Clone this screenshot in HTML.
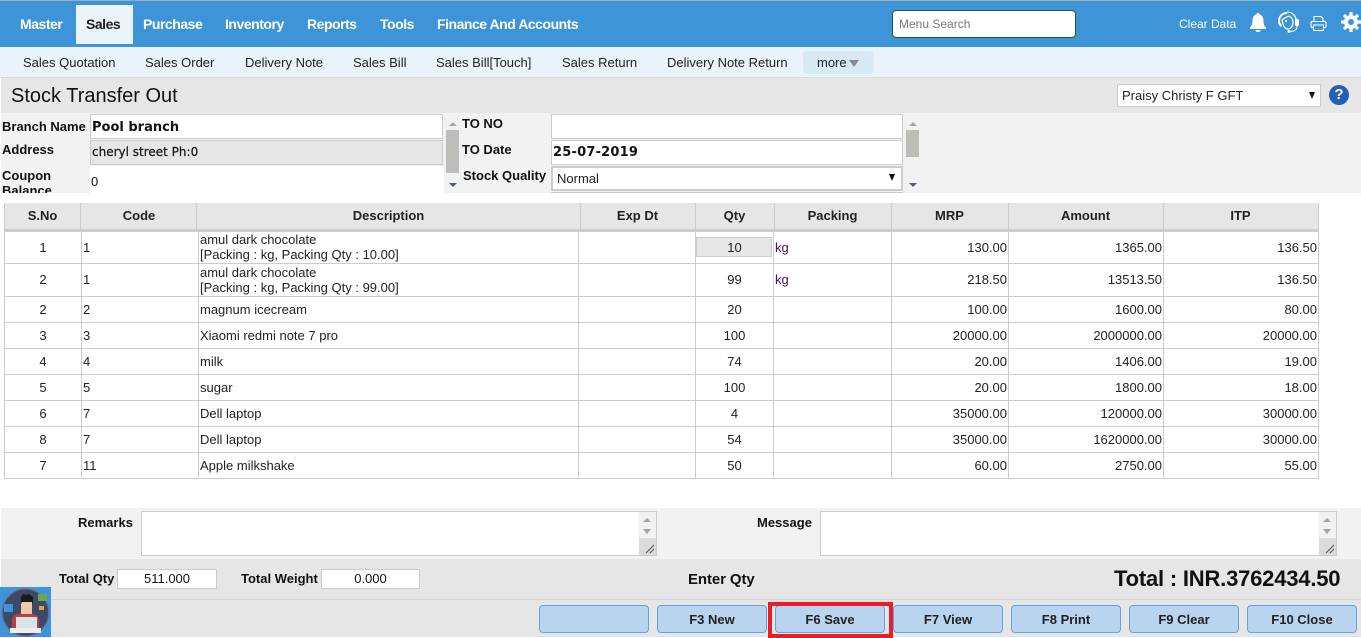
<!DOCTYPE html>
<html><head><meta charset="utf-8"><style>
html,body{margin:0;padding:0;background:#fff}
body{width:1361px;height:638px;position:relative;overflow:hidden;font-family:"Liberation Sans",Arial,sans-serif;color:#111;font-size:12px}
.a{position:absolute;white-space:nowrap}
.m{top:16px;font-size:14px;font-weight:bold;color:#fff;line-height:17px;letter-spacing:-.47px}
.s{top:55px;font-size:13px;color:#222;line-height:16px}
.l{font-size:13px;font-weight:bold;line-height:15px;color:#111}
.i{box-sizing:border-box;border:1px solid #ccc;background:#fff}
.v{position:absolute;width:1px;background:#ccc}
.h{position:absolute;height:1px;background:#ccc;left:4px;width:1315px}
.th{position:absolute;top:208px;font-size:13px;font-weight:bold;line-height:15px;text-align:center;color:#222}
.c{position:absolute;font-size:13px;line-height:15px;color:#222;white-space:nowrap}
.r{text-align:right}.t{text-align:center}
.b{position:absolute;top:605px;width:110px;height:28px;box-sizing:border-box;border:1px solid #5aa5e3;border-radius:4px;background:#b8d4ee;font-size:13px;font-weight:bold;text-align:center;line-height:27px;color:#222}
</style></head><body>
<div class="a" style="left:0;top:0;width:1361px;height:47px;background:#3d94d6;border-top:1px solid #aaa;box-sizing:border-box"></div>
<div class="a" style="left:76px;top:5px;width:57px;height:39px;background:#ebf3fb"></div>
<div class="a m" style="left:20px">Master</div>
<div class="a m" style="left:86px;color:#222">Sales</div>
<div class="a m" style="left:143px">Purchase</div>
<div class="a m" style="left:225px">Inventory</div>
<div class="a m" style="left:307px">Reports</div>
<div class="a m" style="left:380px">Tools</div>
<div class="a m" style="left:437px">Finance And Accounts</div>
<div class="a" style="left:892px;top:10px;width:184px;height:28px;box-sizing:border-box;background:#fff;border:1px solid #1d5e3c;border-radius:4px;padding-left:6px;font-size:12px;line-height:26px;color:#777">Menu Search</div>
<div class="a" style="left:1179px;top:17px;font-size:12px;line-height:15px;color:#fff">Clear Data</div>
<svg class="a" style="left:1249px;top:13px" width="18" height="19" viewBox="0 0 18 19"><path d="M9 0c1 0 1.500.6 1.500 1.300C13.500 2.200 14.500 5 14.500 8c0 3.500 1 5 2.500 6.500V16H1v-1.500C2.500 13 3.500 11.500 3.500 8c0-3 1-5.800 4-6.700C7.500.6 8 0 9 0z" fill="#fff"/><path d="M6.500 17h5c0 1.300-1 2-2.500 2s-2.500-.7-2.500-2z" fill="#fff"/></svg>
<svg class="a" style="left:1277px;top:11px" width="23" height="23" viewBox="0 0 23 23"><path d="M10 1C5 1 1 5 1 10c0 3 1.500 5 3 6l1-2c-1-1-2-2-2-4 0-4 3-7 7-7" fill="#fff"/><path d="M10 1c5 0 9 3.500 9 8" fill="none" stroke="#fff" stroke-width="1.300"/><path d="M5 9c2-2 5-3 7-4 2 1 4 3 4 6 0 4-2 7-5 7-3 0-5-3-6-9z" fill="none" stroke="#fff" stroke-width="1.200"/><circle cx="9" cy="10" r="1" fill="#fff"/><rect x="18" y="8" width="4" height="7" rx="1.500" fill="#fff"/><path d="M20 15c0 4-3 5.500-7 5.500" fill="none" stroke="#fff"/><circle cx="12" cy="20.500" r="1.500" fill="#fff"/></svg>
<svg class="a" style="left:1310px;top:15px" width="17" height="17" viewBox="0 0 17 17" fill="none" stroke="#fff" stroke-width="1.100"><path d="M4 6.500V1.500h7l2 2v3"/><rect x="1" y="6.500" width="15" height="6" rx="1.500"/><rect x="3.500" y="10" width="10" height="5.500" fill="#3d94d6"/></svg>
<svg class="a" style="left:1341px;top:12px" width="20" height="20" viewBox="0 0 20 20"><circle cx="10" cy="10" r="5" fill="none" stroke="#fff" stroke-width="4"/><g stroke="#fff" stroke-width="3.200"><path d="M10 0v4M10 16v4M0 10h4M16 10h4M3 3l3 3M14 14l3 3M17 3l-3 3M6 14l-3 3"/></g></svg>

<div class="a" style="left:0;top:47px;width:1361px;height:30px;background:#eaf3fb"></div>
<div class="a" style="left:0;top:77px;width:1361px;height:1px;background:#d5dde4"></div>
<div class="a s" style="left:23px">Sales Quotation</div>
<div class="a s" style="left:145px">Sales Order</div>
<div class="a s" style="left:245px">Delivery Note</div>
<div class="a s" style="left:353px">Sales Bill</div>
<div class="a s" style="left:436px">Sales Bill[Touch]</div>
<div class="a s" style="left:562px">Sales Return</div>
<div class="a s" style="left:667px">Delivery Note Return</div>
<div class="a" style="left:803px;top:51px;width:71px;height:23px;background:#d5eaf5;border-radius:4px"></div>
<div class="a s" style="left:817px">more</div>
<svg class="a" style="left:849px;top:60px" width="10" height="7"><path d="M0 0h10L5 7z" fill="#888"/></svg>

<div class="a" style="left:1px;top:78px;width:1360px;height:35px;background:#e6e6e6"></div>
<div class="a" style="left:11px;top:85px;font-size:20px;line-height:23px;color:#111">Stock Transfer Out</div>
<div class="a i" style="left:1117px;top:84px;width:204px;height:23px;padding-left:4px;font-size:13px;line-height:22px;color:#222">Praisy Christy F GFT</div>
<svg class="a" style="left:1309px;top:92px" width="6" height="7"><path d="M0 0h6L3 7z" fill="#111"/></svg>
<div class="a" style="left:1329px;top:85px;width:20px;height:20px;border-radius:50%;background:#2160b4;color:#fff;font-weight:bold;font-size:15px;line-height:20px;text-align:center">?</div>

<div class="a" style="left:1px;top:113px;width:1360px;height:80px;background:#f2f2f2"></div>
<div class="a l" style="left:2px;top:119px">Branch Name</div>
<div class="a i" style="left:90px;top:114px;width:353px;height:25px;padding-left:1px;font:bold 13px/25px 'DejaVu Sans',sans-serif;color:#111">Pool branch</div>
<div class="a l" style="left:2px;top:142px">Address</div>
<div class="a i" style="left:90px;top:140px;width:353px;height:25px;padding-left:1px;background:#e6e6e6;font:12px/23px 'DejaVu Sans',sans-serif;color:#111;-webkit-text-stroke:.2px #111">cheryl street Ph:0</div>
<div class="a" style="left:90px;top:166px;width:354px;height:27px;background:#fff"></div>
<div class="a" style="left:2px;top:168px;width:80px;height:25px;overflow:hidden;white-space:normal;font-size:13px;font-weight:bold;line-height:15px">Coupon Balance</div>
<div class="a" style="left:91px;top:174px;font-size:13px;line-height:15px">0</div>
<svg class="a" style="left:446px;top:117px" width="14" height="76"><path d="M3 9l4-4 4 4z" fill="#a8a8a8"/><rect x="0" y="13" width="13" height="43" fill="#bdbdb9"/><path d="M3 66h8l-4 4z" fill="#4a5a78"/></svg>
<div class="a l" style="left:462px;top:116px">TO NO</div>
<div class="a i" style="left:551px;top:114px;width:352px;height:25px"></div>
<div class="a l" style="left:462px;top:142px">TO Date</div>
<div class="a i" style="left:551px;top:140px;width:352px;height:25px;padding-left:1px;font:bold 13px/24px 'DejaVu Sans',sans-serif;letter-spacing:.2px;color:#111">25-07-2019</div>
<div class="a l" style="left:463px;top:168px">Stock Quality</div>
<div class="a" style="left:551px;top:166px;width:352px;height:25px;box-sizing:border-box;border:2px solid #ccc;background:#fff;padding-left:4px;font-size:13px;line-height:21px;color:#222">Normal</div>
<div class="a" style="left:551px;top:192px;width:352px;height:1px;background:#ccc"></div>
<svg class="a" style="left:889px;top:174px" width="6" height="7"><path d="M0 0h6L3 7z" fill="#111"/></svg>
<svg class="a" style="left:906px;top:117px" width="14" height="76"><path d="M3 9l4-4 4 4z" fill="#a8a8a8"/><rect x="0" y="13" width="13" height="27" fill="#bdbdb9"/><path d="M3 66h8l-4 4z" fill="#4a5a78"/></svg>

<!-- table -->
<div class="a" style="left:4px;top:203px;width:1315px;height:26px;background:#e6e6e6"></div>
<div class="a" style="left:4px;top:229px;width:1315px;height:3px;background:#ccc"></div>
<div class="v" style="left:4px;top:203px;height:276px"></div><div class="v" style="left:1318px;top:203px;height:276px"></div>
<div class="v" style="left:80px;top:203px;height:26px"></div><div class="v" style="left:196px;top:203px;height:26px"></div><div class="v" style="left:580px;top:203px;height:26px"></div><div class="v" style="left:695px;top:203px;height:26px"></div><div class="v" style="left:774px;top:203px;height:26px"></div><div class="v" style="left:891px;top:203px;height:26px"></div><div class="v" style="left:1008px;top:203px;height:26px"></div><div class="v" style="left:1163px;top:203px;height:26px"></div>
<div class="v" style="left:81px;top:232px;height:246px"></div><div class="v" style="left:198px;top:232px;height:246px"></div><div class="v" style="left:578px;top:232px;height:246px"></div><div class="v" style="left:695px;top:232px;height:246px"></div><div class="v" style="left:773px;top:232px;height:246px"></div><div class="v" style="left:891px;top:232px;height:246px"></div><div class="v" style="left:1008px;top:232px;height:246px"></div><div class="v" style="left:1163px;top:232px;height:246px"></div>
<div class="h" style="top:263px"></div><div class="h" style="top:296px"></div><div class="h" style="top:322px"></div><div class="h" style="top:348px"></div><div class="h" style="top:374px"></div><div class="h" style="top:400px"></div><div class="h" style="top:426px"></div><div class="h" style="top:452px"></div><div class="h" style="top:478px"></div>
<div class="th" style="left:4px;width:77px">S.No</div><div class="th" style="left:81px;width:116px">Code</div><div class="th" style="left:197px;width:383px">Description</div><div class="th" style="left:580px;width:115px">Exp Dt</div><div class="th" style="left:695px;width:79px">Qty</div><div class="th" style="left:774px;width:117px">Packing</div><div class="th" style="left:891px;width:117px">MRP</div><div class="th" style="left:1008px;width:155px">Amount</div><div class="th" style="left:1163px;width:155px">ITP</div>
<div class="a" style="left:696px;top:237px;width:76px;height:20px;background:#e6e6e6;border:1px solid #ccc;box-sizing:border-box"></div>

<div class="c t" style="left:5px;width:76px;top:240px">1</div><div class="c" style="left:83px;top:240px">1</div><div class="c" style="left:200px;top:232px">amul dark chocolate<br>[Packing : kg, Packing Qty : 10.00]</div><div class="c t" style="left:696px;width:77px;top:240px">10</div><div class="c" style="left:775px;top:240px;color:#4b0f6b">kg</div><div class="c r" style="left:892px;width:115px;top:240px">130.00</div><div class="c r" style="left:1009px;width:153px;top:240px">1365.00</div><div class="c r" style="left:1164px;width:153px;top:240px">136.50</div>
<div class="c t" style="left:5px;width:76px;top:272px">2</div><div class="c" style="left:83px;top:272px">1</div><div class="c" style="left:200px;top:265px">amul dark chocolate<br>[Packing : kg, Packing Qty : 99.00]</div><div class="c t" style="left:696px;width:77px;top:272px">99</div><div class="c" style="left:775px;top:272px;color:#4b0f6b">kg</div><div class="c r" style="left:892px;width:115px;top:272px">218.50</div><div class="c r" style="left:1009px;width:153px;top:272px">13513.50</div><div class="c r" style="left:1164px;width:153px;top:272px">136.50</div>
<div class="c t" style="left:5px;width:76px;top:302px">2</div><div class="c" style="left:83px;top:302px">2</div><div class="c" style="left:200px;top:302px">magnum icecream</div><div class="c t" style="left:696px;width:77px;top:302px">20</div><div class="c r" style="left:892px;width:115px;top:302px">100.00</div><div class="c r" style="left:1009px;width:153px;top:302px">1600.00</div><div class="c r" style="left:1164px;width:153px;top:302px">80.00</div>
<div class="c t" style="left:5px;width:76px;top:328px">3</div><div class="c" style="left:83px;top:328px">3</div><div class="c" style="left:200px;top:328px">Xiaomi redmi note 7 pro</div><div class="c t" style="left:696px;width:77px;top:328px">100</div><div class="c r" style="left:892px;width:115px;top:328px">20000.00</div><div class="c r" style="left:1009px;width:153px;top:328px">2000000.00</div><div class="c r" style="left:1164px;width:153px;top:328px">20000.00</div>
<div class="c t" style="left:5px;width:76px;top:354px">4</div><div class="c" style="left:83px;top:354px">4</div><div class="c" style="left:200px;top:354px">milk</div><div class="c t" style="left:696px;width:77px;top:354px">74</div><div class="c r" style="left:892px;width:115px;top:354px">20.00</div><div class="c r" style="left:1009px;width:153px;top:354px">1406.00</div><div class="c r" style="left:1164px;width:153px;top:354px">19.00</div>
<div class="c t" style="left:5px;width:76px;top:380px">5</div><div class="c" style="left:83px;top:380px">5</div><div class="c" style="left:200px;top:380px">sugar</div><div class="c t" style="left:696px;width:77px;top:380px">100</div><div class="c r" style="left:892px;width:115px;top:380px">20.00</div><div class="c r" style="left:1009px;width:153px;top:380px">1800.00</div><div class="c r" style="left:1164px;width:153px;top:380px">18.00</div>
<div class="c t" style="left:5px;width:76px;top:406px">6</div><div class="c" style="left:83px;top:406px">7</div><div class="c" style="left:200px;top:406px">Dell laptop</div><div class="c t" style="left:696px;width:77px;top:406px">4</div><div class="c r" style="left:892px;width:115px;top:406px">35000.00</div><div class="c r" style="left:1009px;width:153px;top:406px">120000.00</div><div class="c r" style="left:1164px;width:153px;top:406px">30000.00</div>
<div class="c t" style="left:5px;width:76px;top:432px">8</div><div class="c" style="left:83px;top:432px">7</div><div class="c" style="left:200px;top:432px">Dell laptop</div><div class="c t" style="left:696px;width:77px;top:432px">54</div><div class="c r" style="left:892px;width:115px;top:432px">35000.00</div><div class="c r" style="left:1009px;width:153px;top:432px">1620000.00</div><div class="c r" style="left:1164px;width:153px;top:432px">30000.00</div>
<div class="c t" style="left:5px;width:76px;top:458px">7</div><div class="c" style="left:83px;top:458px">11</div><div class="c" style="left:200px;top:458px">Apple milkshake</div><div class="c t" style="left:696px;width:77px;top:458px">50</div><div class="c r" style="left:892px;width:115px;top:458px">60.00</div><div class="c r" style="left:1009px;width:153px;top:458px">2750.00</div><div class="c r" style="left:1164px;width:153px;top:458px">55.00</div>

<!-- bottom -->
<div class="a" style="left:1px;top:508px;width:1360px;height:51px;background:#f2f2f2"></div>
<div class="a" style="left:1px;top:559px;width:1360px;height:78px;background:#e6e6e6"></div>
<div class="a" style="left:1px;top:599px;width:1360px;height:1px;background:#d6d6d6"></div>
<div class="a l" style="left:78px;top:515px">Remarks</div>
<div class="a i" style="left:141px;top:511px;width:516px;height:45px"></div>
<div class="a" style="left:639px;top:512px;width:17px;height:43px;background:#f1f1f1"></div>
<div class="a" style="left:639px;top:538px;width:17px;height:17px;background:#dcdcdc"></div>
<svg class="a" style="left:639px;top:512px" width="17" height="43"><path d="M4 10l4-4 4 4zM4 17h8l-4 5z" fill="#a3a3a3"/><path d="M7 41l8-8M11 41l4-4" stroke="#555" fill="none"/></svg>
<div class="a l" style="left:757px;top:515px">Message</div>
<div class="a i" style="left:820px;top:511px;width:517px;height:45px"></div>
<div class="a" style="left:1319px;top:512px;width:17px;height:43px;background:#f1f1f1"></div>
<div class="a" style="left:1319px;top:538px;width:17px;height:17px;background:#dcdcdc"></div>
<svg class="a" style="left:1319px;top:512px" width="17" height="43"><path d="M4 10l4-4 4 4zM4 17h8l-4 5z" fill="#a3a3a3"/><path d="M7 41l8-8M11 41l4-4" stroke="#555" fill="none"/></svg>

<div class="a l" style="left:59px;top:571px">Total Qty</div>
<div class="a i" style="left:117px;top:569px;width:100px;height:20px;text-align:center;font-size:13px;line-height:18px">511.000</div>
<div class="a l" style="left:241px;top:571px">Total Weight</div>
<div class="a i" style="left:321px;top:569px;width:99px;height:20px;text-align:center;font-size:13px;line-height:18px">0.000</div>
<div class="a" style="left:688px;top:571px;font-size:15px;font-weight:bold;line-height:17px;letter-spacing:-.1px">Enter Qty</div>
<div class="a" style="left:1114px;top:566px;font-size:22px;font-weight:bold;line-height:25px;color:#111;letter-spacing:-.2px">Total : INR.3762434.50</div>

<div class="b" style="left:539px"></div>
<div class="b" style="left:657px">F3 New</div>
<div class="b" style="left:775px">F6 Save</div>
<div class="b" style="left:893px">F7 View</div>
<div class="b" style="left:1011px">F8 Print</div>
<div class="b" style="left:1129px">F9 Clear</div>
<div class="b" style="left:1247px">F10 Close</div>
<div class="a" style="left:768px;top:602px;width:125px;height:36px;box-sizing:border-box;border:4px solid #ee1c25"></div>

<!-- avatar -->
<svg class="a" style="left:0;top:587px" width="51" height="50" viewBox="0 0 51 50">
<rect width="51" height="50" fill="#3d94d6"/>
<ellipse cx="25.500" cy="25.500" rx="23" ry="23.500" fill="#3c4a66" stroke="#7d5a88"/>
<rect x="38" y="7" width="9" height="7" fill="#6aa84f"/><rect x="4" y="17" width="9" height="8" fill="#3d94d6"/><rect x="39" y="19" width="5" height="4" fill="#d9a640"/>
<path d="M12 42v-9c0-5 5-7 13-7s14 2 14 7v9z" fill="#b8413f"/>
<rect x="21" y="14" width="11" height="13" fill="#eec9a8"/>
<path d="M21 10l2-3 3 1 3-1 4 3v7l-1-2H22l-1 2z" fill="#1a1a1a"/>
<rect x="16" y="30" width="21" height="13" fill="#dbe3ea"/>
<rect x="10" y="41" width="31" height="5" fill="#eee"/>
</svg>
</body></html>
